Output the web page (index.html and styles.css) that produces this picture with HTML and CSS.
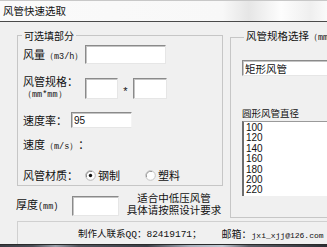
FILE: index.html
```html
<!doctype html>
<html lang="zh">
<head>
  <meta charset="utf-8">
  <title>风管快速选取</title>
  <link rel="stylesheet" href="styles.css">
</head>
<body>
<div class="window">
  <div class="titlebar">风管快速选取</div>

  <div class="main">
    <div class="left">
      <fieldset class="group group-left">
        <legend>可选填部分</legend>

        <div class="row row-flow">
          <span class="label w62">风量<span class="lat">（m3/h）</span></span>
          <input class="box box-flow" type="text">
        </div>

        <div class="row row-size">
          <span class="label w62 two">风管规格：<br><span class="lat">（mm*mm）</span></span>
          <input class="box box-a" type="text">
          <span class="star">*</span>
          <input class="box box-b" type="text">
        </div>

        <div class="row row-rate">
          <span class="label w48">速度率：</span>
          <input class="box box-rate" type="text" value="95">
        </div>

        <div class="row row-speed">
          <span class="label">速度<span class="lat">（m/s）</span>：</span>
        </div>

        <div class="row row-mat">
          <span class="label w62">风管材质：</span>
          <span class="radio">
            <svg width="11" height="11" viewBox="0 0 11 11"><circle cx="5.5" cy="5.5" r="4.8" fill="#fdfdfd" stroke="#b4b4b4"/><path d="M1.6 7.2 A4.3 4.3 0 0 1 7.2 1.6" fill="none" stroke="#8a8a8a"/><circle cx="5.5" cy="5.5" r="1.7" fill="#111"/></svg>
            钢制
          </span>
          <span class="radio radio-2">
            <svg width="11" height="11" viewBox="0 0 11 11"><circle cx="5.5" cy="5.5" r="4.8" fill="#fdfdfd" stroke="#c4c4c4"/><path d="M1.6 7.2 A4.3 4.3 0 0 1 7.2 1.6" fill="none" stroke="#9a9a9a"/></svg>
            塑料
          </span>
        </div>
      </fieldset>

      <div class="thick">
        <span class="label w56">厚度<span class="lat">(mm)</span></span>
        <input class="box box-thick" type="text">
        <div class="note">
          <div>适合中低压风管</div>
          <div>具体请按照设计要求</div>
        </div>
      </div>
    </div>

    <fieldset class="group group-right">
      <legend>风管规格选择<span class="lat">（mm）：</span></legend>
      <input class="box box-type" type="text" value="矩形风管">
      <div class="list-title">圆形风管直径</div>
      <div class="listbox">
        <div>100</div>
        <div>120</div>
        <div>140</div>
        <div>160</div>
        <div>180</div>
        <div>200</div>
        <div>220</div>
      </div>
    </fieldset>
  </div>

  <div class="status">
    <span class="contact">制作人联系<span class="num">QQ</span>：<span class="num">82419171</span>；</span>
    <span class="mail">邮箱：<span class="addr">jxi_xjj@126.com</span></span>
  </div>

  <div class="taskbar"></div>
</div>
</body>
</html>
```

FILE: styles.css
```css
/* page */
body {
  margin: 0;
  font-family: "Noto Sans CJK SC", "Noto Sans CJK JP", sans-serif;
  font-size: 11px;
  color: #111;
}

.window {
  width: 327px;
  height: 247px;
  overflow: hidden;
  background: #f0f0f0;
  display: flex;
  flex-direction: column;
}

/* title bar */
.titlebar {
  flex: none;
  height: 20px;
  line-height: 20px;
  padding-left: 3px;
  font-size: 10.5px;
  border-top: 1px solid #c8c8c8;
  border-bottom: 1px solid #4a4a4a;
  background: linear-gradient(90deg, #fafafa 0, #f8f8f8 68%, #e6e6e6 76%, #fdfdfd 86%, #efefef 95%, #fafafa);
}

/* main area */
.main {
  flex: none;
  display: grid;
  grid-template-columns: 207px 120px;
  column-gap: 7px;
  padding-left: 16px;
}

.left {
  display: flex;
  flex-direction: column;
}

.group {
  margin: 7px 0 0;
  padding: 0;
  border: 1px solid #c6c6c6;
  min-width: 0;
}
.group legend {
  padding: 0 2px;
  line-height: 13px;
  font-size: 10px;
}
.group-left {
  margin-left: 1px;
  padding-bottom: 4px;
}
.group-left legend {
  margin-left: 4px;
}
.group-right {
  padding: 0 0 21px 11px;
}
.group-right legend {
  margin-left: 2px;
  font-size: 10.5px;
}

.lat {
  font-family: "Liberation Mono", monospace;
  font-size: 8.5px;
}

/* rows in left group */
.row {
  display: flex;
  align-items: center;
  padding-left: 5px;
}
.label {
  flex: none;
  line-height: 13px;
  white-space: nowrap;
}
.w62 { width: 62px; }
.w56 { width: 56px; }
.w48 { width: 48px; }

.row-flow { margin-top: 3px; height: 19px; }
.row-flow .label { align-self: flex-end; }
.row-size { margin-top: 14px; height: 21px; }
.row-size .two { line-height: 11px; }
.row-rate { margin-top: 13px; height: 16px; }
.row-speed { margin-top: 12px; height: 12px; }
.row-mat { margin-top: 17px; height: 12px; }

/* sunken text boxes */
.box {
  box-sizing: border-box;
  margin: 0;
  padding: 0 2px;
  border: 1px solid;
  border-color: #8a8a8a #e6e6e6 #e6e6e6 #8a8a8a;
  box-shadow: inset 1px 1px 0 #c4c4c4;
  background: #fff;
  font-family: "Liberation Sans", sans-serif;
  font-size: 10px;
  color: #111;
  outline: none;
}
.box-flow { width: 81px; height: 19px; }
.box-a { width: 33px; height: 21px; }
.box-b { width: 34px; height: 21px; }
.box-rate { width: 61px; height: 16px; border-right-color: #f4f4f4; }
.box-thick { width: 47px; height: 20px; margin-top: 4px; }
.box-type {
  width: 100px;
  height: 16px;
  margin-top: 15px;
  font-family: "Noto Sans CJK SC", sans-serif;
  font-size: 10.5px;
}

.star {
  width: 15px;
  text-align: center;
  align-self: flex-end;
  line-height: 16px;
  font-family: "Liberation Sans", sans-serif;
}

/* radio buttons */
.radio {
  display: flex;
  align-items: center;
  gap: 2px;
}
.radio svg { flex: none; }
.radio-2 { margin-left: 25px; }

/* thickness row */
.thick {
  display: flex;
  align-items: flex-start;
  height: 24px;
  margin-top: 6px;
}
.thick .label {
  align-self: center;
  margin-top: 3px;
}
.note {
  flex: 1;
  padding-left: 6px;
  text-align: center;
  line-height: 12px;
  font-size: 10.5px;
  white-space: nowrap;
}

/* right group */
.list-title {
  margin-top: 31px;
  line-height: 12px;
  font-size: 9.5px;
}
.listbox {
  margin-top: 2px;
  height: 75px;
  box-sizing: border-box;
  padding: 1px 0 0 2px;
  background: #fff;
  border-left: 2px solid #6e6e6e;
  border-top: 1px solid #9a9a9a;
  font-family: "Liberation Sans", sans-serif;
  font-size: 10px;
  line-height: 10.4px;
}

/* status panel */
.status {
  flex: none;
  margin: 3px 0 0 17px;
  height: 22px;
  padding-left: 60px;
  border-top: 1px solid #d0d0d0;
  border-left: 1px solid #d0d0d0;
  display: flex;
  align-items: center;
  font-size: 9.5px;
  white-space: nowrap;
}
.num {
  font-family: "Liberation Mono", monospace;
  font-size: 9.5px;
}
.mail { margin-left: 20px; font-size: 10px; }
.addr {
  font-family: "Liberation Mono", monospace;
  font-size: 8px;
}

/* strip of the desktop below the window */
.taskbar {
  flex: 1;
  border-top: 1px solid #2a2a2a;
  background: linear-gradient(90deg, #3a3d44 0, #4a4e56 10%, #9aa0aa 17%, #50545c 24%, #3c4048 45%, #a8b0bc 58%, #c0c8d2 68%, #5a5e66 76%, #2c2f35 100%);
}
```
